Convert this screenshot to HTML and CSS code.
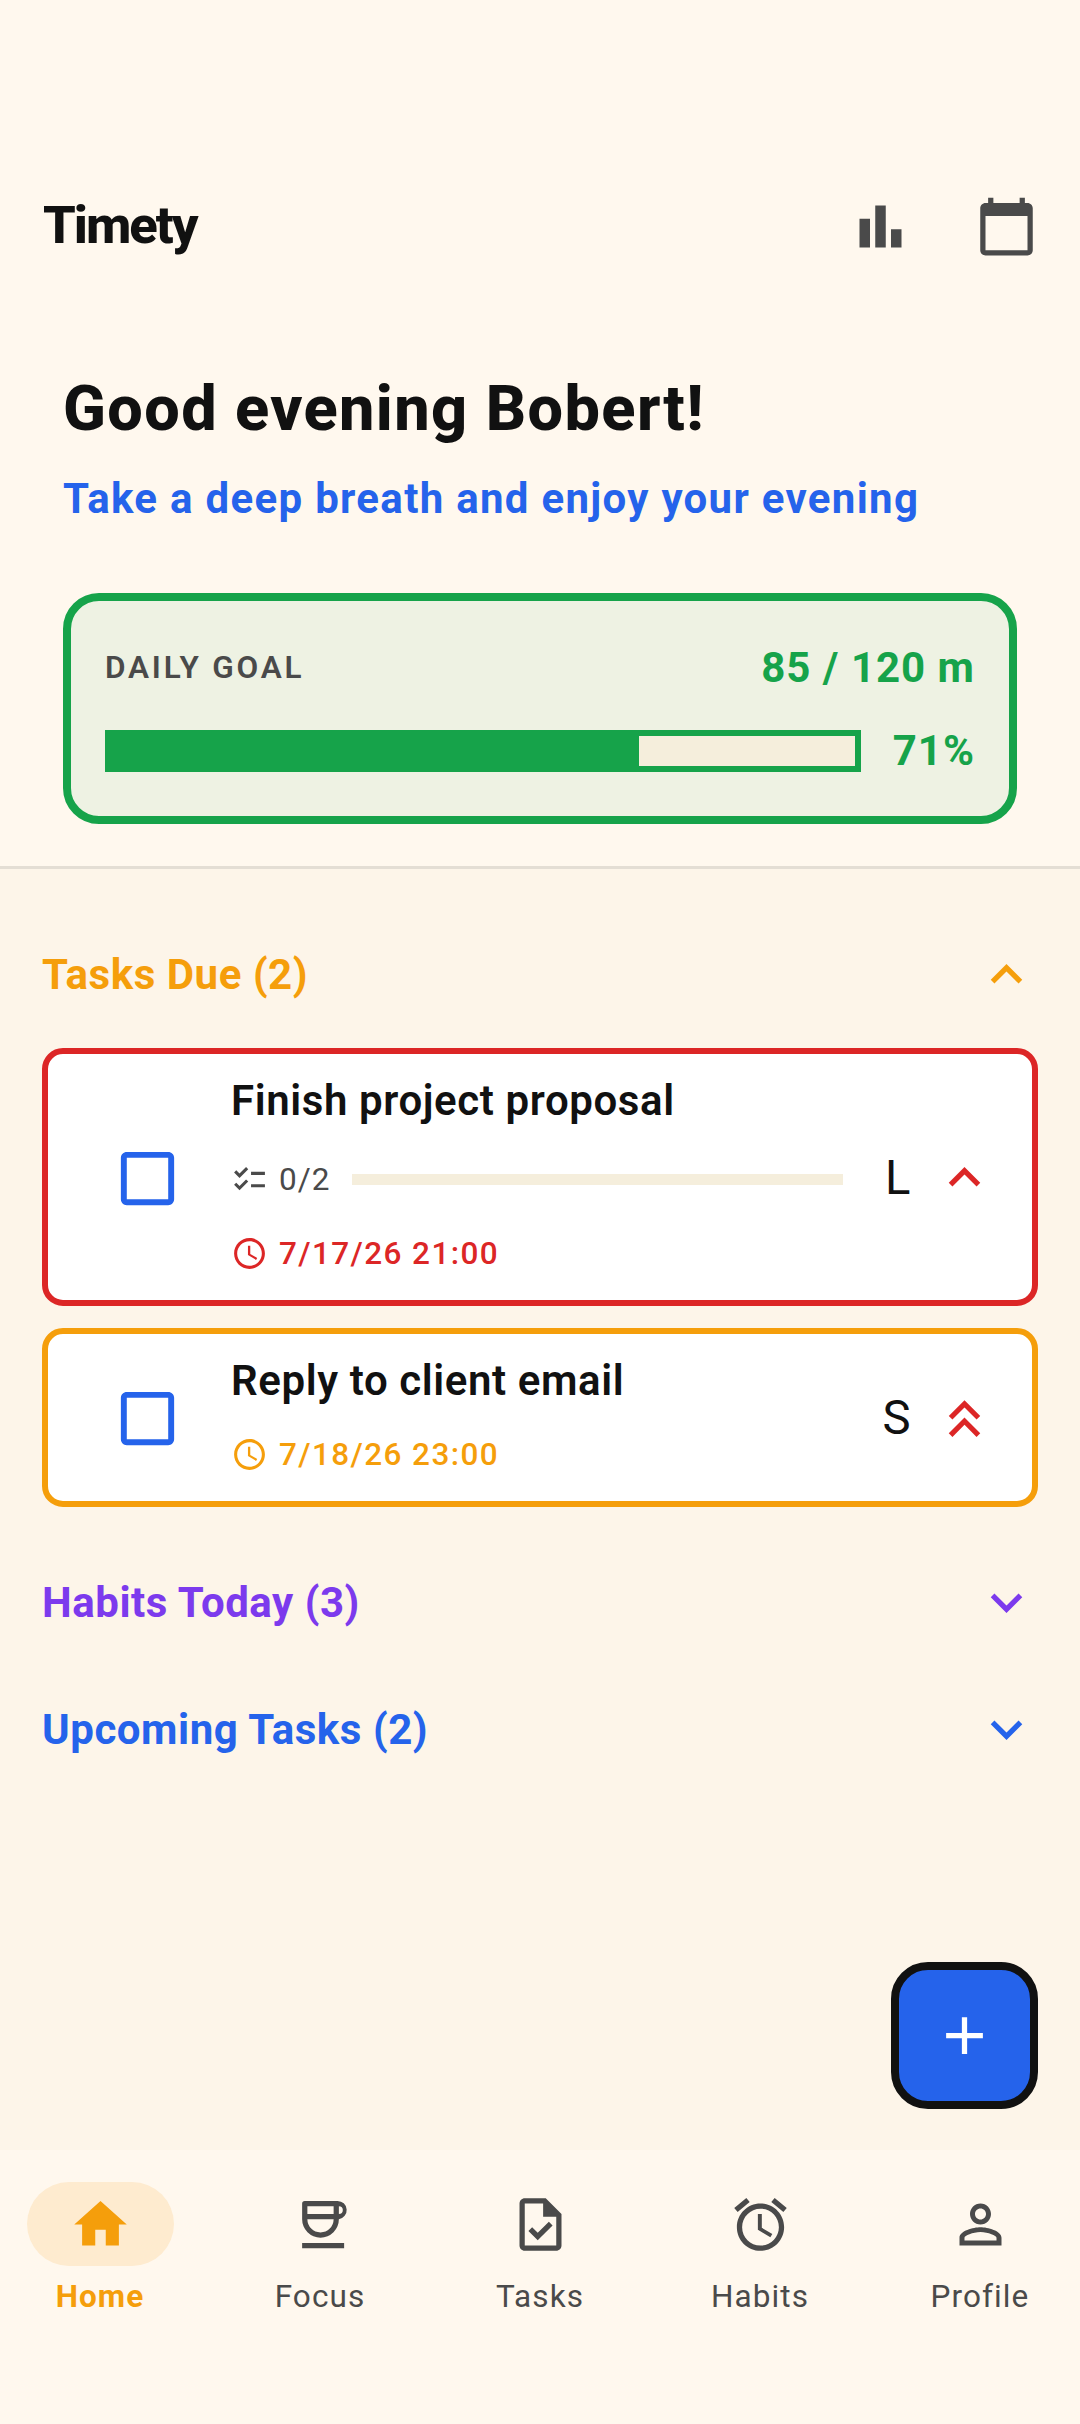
FILE: index.html
```html
<!DOCTYPE html>
<html lang="en">
<head>
    <meta charset="UTF-8">
    <meta name="viewport" content="width=device-width, initial-scale=1.0">
    <title>Timety</title>
    <link rel="stylesheet" href="styles.css">
</head>
<body>
    <div class="page">
        <div class="top">
            <header class="app-header">
                <h1 class="brand">Timety</h1>
                <div class="header-icons">
                    <svg class="icon-nav" viewBox="0 0 24 24"><path d="M4 9h4v11H4zM16 13h4v7h-4zM10 4h4v16h-4z"/></svg>
                    <svg class="icon-nav" viewBox="0 0 24 24"><path d="M20 3h-1V1h-2v2H7V1H5v2H4c-1.1 0-2 .9-2 2v16c0 1.1.9 2 2 2h16c1.1 0 2-.9 2-2V5c0-1.1-.9-2-2-2zm0 18H4V8h16v13z"/></svg>
                </div>
            </header>
            <div class="hero">
                <h2 class="greeting">Good evening Bobert!</h2>
                <p class="subtitle">Take a deep breath and enjoy your evening</p>
                <div class="goal-card">
                    <div class="goal-row">
                        <span class="goal-label">DAILY GOAL</span>
                        <span class="goal-value">85 / 120 m</span>
                    </div>
                    <div class="goal-progress">
                        <div class="goal-bar"><div class="goal-fill" style="width: 71%"></div></div>
                        <span class="goal-percent">71%</span>
                    </div>
                </div>
            </div>
        </div>

        <main class="content">
            <section class="section">
                <div class="section-head due">
                    <span>Tasks Due (2)</span>
                    <svg class="icon-nav" viewBox="0 0 24 24"><path d="M7.41 15.41L12 10.83l4.59 4.58L18 14l-6-6-6 6z"/></svg>
                </div>
                <div class="task-list">
                    <div class="task overdue">
                        <svg class="task-check" viewBox="0 0 24 24"><path d="M19 5v14H5V5h14m0-2H5c-1.1 0-2 .9-2 2v14c0 1.1.9 2 2 2h14c1.1 0 2-.9 2-2V5c0-1.1-.9-2-2-2z"/></svg>
                        <div class="task-body">
                            <div class="task-title">Finish project proposal</div>
                            <div class="task-sub">
                                <svg class="icon-small" viewBox="0 0 24 24"><path d="M22 7h-9v2h9V7zm0 8h-9v2h9v-2zM5.54 11L2 7.46l1.41-1.41 2.12 2.12 4.24-4.24 1.41 1.41L5.54 11zm0 8L2 15.46l1.41-1.41 2.12 2.12 4.24-4.24 1.41 1.41L5.54 19z"/></svg>
                                <span class="task-count">0/2</span>
                                <div class="task-track"></div>
                            </div>
                            <div class="task-date">
                                <svg class="icon-small" viewBox="0 0 24 24"><path d="M11.99 2C6.47 2 2 6.48 2 12s4.47 10 9.99 10C17.52 22 22 17.52 22 12S17.52 2 11.99 2zM12 20c-4.42 0-8-3.58-8-8s3.58-8 8-8 8 3.58 8 8-3.58 8-8 8zm.5-13H11v6l5.25 3.15.75-1.23-4.5-2.67z"/></svg>
                                <span>7/17/26 21:00</span>
                            </div>
                        </div>
                        <div class="task-meta">
                            <span class="task-size">L</span>
                            <svg class="icon-nav priority" viewBox="0 0 24 24"><path d="M7.41 15.41L12 10.83l4.59 4.58L18 14l-6-6-6 6z"/></svg>
                        </div>
                    </div>
                    <div class="task soon">
                        <svg class="task-check" viewBox="0 0 24 24"><path d="M19 5v14H5V5h14m0-2H5c-1.1 0-2 .9-2 2v14c0 1.1.9 2 2 2h14c1.1 0 2-.9 2-2V5c0-1.1-.9-2-2-2z"/></svg>
                        <div class="task-body">
                            <div class="task-title">Reply to client email</div>
                            <div class="task-date">
                                <svg class="icon-small" viewBox="0 0 24 24"><path d="M11.99 2C6.47 2 2 6.48 2 12s4.47 10 9.99 10C17.52 22 22 17.52 22 12S17.52 2 11.99 2zM12 20c-4.42 0-8-3.58-8-8s3.58-8 8-8 8 3.58 8 8-3.58 8-8 8zm.5-13H11v6l5.25 3.15.75-1.23-4.5-2.67z"/></svg>
                                <span>7/18/26 23:00</span>
                            </div>
                        </div>
                        <div class="task-meta">
                            <span class="task-size">S</span>
                            <svg class="icon-nav priority" viewBox="0 0 24 24"><path d="M6 17.59L7.41 19 12 14.42 16.59 19 18 17.59l-6-6zM6 11l1.41 1.41L12 7.83l4.59 4.58L18 11l-6-6z"/></svg>
                        </div>
                    </div>
                </div>
            </section>

            <section class="section">
                <div class="section-head habits">
                    <span>Habits Today (3)</span>
                    <svg class="icon-nav" viewBox="0 0 24 24"><path d="M7.41 8.59L12 13.17l4.59-4.58L18 10l-6 6-6-6z"/></svg>
                </div>
            </section>

            <section class="section">
                <div class="section-head upcoming">
                    <span>Upcoming Tasks (2)</span>
                    <svg class="icon-nav" viewBox="0 0 24 24"><path d="M7.41 8.59L12 13.17l4.59-4.58L18 10l-6 6-6-6z"/></svg>
                </div>
            </section>

            <button class="fab" type="button">
                <svg class="icon-nav" viewBox="0 0 24 24"><path d="M19 13h-6v6h-2v-6H5v-2h6V5h2v6h6v2z"/></svg>
            </button>
        </main>

        <nav class="bottom-nav">
            <div class="nav-item active">
                <div class="nav-pill">
                    <svg class="icon-nav" viewBox="0 0 24 24"><path d="M10 20v-6h4v6h5v-8h3L12 3 2 12h3v8z"/></svg>
                </div>
                <span class="nav-label">Home</span>
            </div>
            <div class="nav-item">
                <div class="nav-pill">
                    <svg class="icon-nav" viewBox="0 0 24 24"><path fill-rule="evenodd" d="M6 3h12.5a3.5 3.5 0 0 1 .5 6.96V10a7 7 0 0 1-14 0V4a1 1 0 0 1 1-1zM7 5v3h10V5zM7 10a5 5 0 0 0 10 0zM19 5v3a1.5 1.5 0 0 0 0-3zM5 19h16v2H5z"/></svg>
                </div>
                <span class="nav-label">Focus</span>
            </div>
            <div class="nav-item">
                <div class="nav-pill">
                    <svg class="icon-nav" viewBox="0 0 24 24"><path d="M14 2H6c-1.1 0-1.99.9-1.99 2L4 20c0 1.1.89 2 1.99 2H18c1.1 0 2-.9 2-2V8l-6-6zm4 18H6V4h7v5h5v11zm-9.18-6.95L7.4 14.46 10.94 18l5.66-5.66-1.41-1.41-4.24 4.24-2.13-2.12z"/></svg>
                </div>
                <span class="nav-label">Tasks</span>
            </div>
            <div class="nav-item">
                <div class="nav-pill">
                    <svg class="icon-nav" viewBox="0 0 24 24"><path d="M22 5.72l-4.6-3.86-1.29 1.53 4.6 3.86L22 5.72zM7.88 3.39L6.6 1.86 2 5.71l1.29 1.53 4.59-3.85zM12.5 8H11v6l4.75 2.85.75-1.23-4-2.37V8zM12 4c-4.97 0-9 4.03-9 9s4.03 9 9 9 9-4.03 9-9-4.03-9-9-9zm0 16c-3.87 0-7-3.13-7-7s3.13-7 7-7 7 3.13 7 7-3.13 7-7 7z"/></svg>
                </div>
                <span class="nav-label">Habits</span>
            </div>
            <div class="nav-item">
                <div class="nav-pill">
                    <svg class="icon-nav" viewBox="0 0 24 24"><path d="M12 5.9c1.16 0 2.1.94 2.1 2.1s-.94 2.1-2.1 2.1S9.9 9.16 9.9 8s.94-2.1 2.1-2.1m0 9c2.97 0 6.1 1.46 6.1 2.1v1.1H5.9V17c0-.64 3.13-2.1 6.1-2.1M12 4C9.79 4 8 5.79 8 8s1.79 4 4 4 4-1.79 4-4-1.79-4-4-4zm0 9c-2.67 0-8 1.34-8 4v3h16v-3c0-2.66-5.33-4-8-4z"/></svg>
                </div>
                <span class="nav-label">Profile</span>
            </div>
        </nav>
    </div>
</body>
</html>
```

FILE: styles.css
```css
* {
    box-sizing: border-box;
}
body {
    margin: 0;
    font-family: Roboto, "Liberation Sans", sans-serif;
    background-color: #fff8ee;
    color: #111;
}
svg {
    display: block;
    flex-shrink: 0;
    fill: currentColor;
}
.page {
    width: 1080px;
    height: 2424px;
    display: flex;
    flex-direction: column;
}
.icon-nav {
    width: 63px;
    height: 63px;
}
.icon-small {
    width: 37px;
    height: 37px;
}

/* top part */
.top {
    border-bottom: 3px solid #e4ded4;
    padding-top: 190px;
    padding-bottom: 42px;
}
.app-header {
    height: 72px;
    padding: 0 42px 0 43px;
    display: flex;
    align-items: center;
    justify-content: space-between;
}
.brand {
    margin: 0 0 2px;
    font-size: 52.5px;
    font-weight: 800;
    letter-spacing: -2px;
}
.header-icons {
    display: flex;
    align-items: center;
    gap: 63px;
    color: #4a4a4a;
}
.hero {
    margin-top: 110px;
    padding: 0 63px;
}
.greeting {
    margin: 0;
    font-size: 63px;
    line-height: 74px;
    font-weight: 800;
    letter-spacing: 1.4px;
}
.subtitle {
    margin: 24px 0 0;
    padding-top: 1px;
    font-size: 42px;
    line-height: 55px;
    font-weight: 700;
    letter-spacing: 1.3px;
    color: #2563eb;
}
.goal-card {
    margin-top: 67px;
    padding: 41px 34px 44px;
    border: 8px solid #16a34a;
    border-radius: 36px;
    background-color: #eef2e3;
}
.goal-row {
    display: flex;
    align-items: center;
    justify-content: space-between;
    height: 50px;
}
.goal-label {
    font-size: 31.5px;
    font-weight: 600;
    letter-spacing: 2.8px;
    color: #4a4a4a;
}
.goal-value {
    font-size: 42px;
    font-weight: 700;
    letter-spacing: 1px;
    color: #16a34a;
}
.goal-progress {
    margin-top: 38px;
    height: 42px;
    display: flex;
    align-items: center;
    gap: 32px;
}
.goal-bar {
    flex: 1;
    height: 42px;
    border: 6px solid #16a34a;
    background-color: #f5eedc;
}
.goal-fill {
    height: 100%;
    background-color: #16a34a;
}
.goal-percent {
    font-size: 42px;
    line-height: 42px;
    font-weight: 700;
    letter-spacing: 1px;
    color: #16a34a;
}

/* sections */
.content {
    flex: 1;
    position: relative;
    padding: 74px 42px 0;
    background-color: #fdf5e9;
}
.section {
    margin-bottom: 64px;
}
.section-head {
    height: 63px;
    display: flex;
    align-items: center;
    justify-content: space-between;
    font-size: 42px;
    font-weight: 700;
    letter-spacing: 0.55px;
}
.due {
    color: #f59e0b;
}
.habits {
    color: #7c3aed;
}
.upcoming {
    color: #2563eb;
}
.task-list {
    margin-top: 42px;
    display: flex;
    flex-direction: column;
    gap: 22px;
}
.task {
    display: flex;
    align-items: center;
    padding: 23px 36px 28px 64px;
    border: 6px solid;
    border-radius: 21px;
    background-color: #fff;
}
.task.overdue {
    border-color: #dc2626;
}
.task.soon {
    border-color: #f59e0b;
}
.task-check {
    width: 71px;
    height: 71px;
    margin-top: 7px;
    margin-right: 48px;
    color: #2563eb;
}
.task-body {
    flex: 1;
    display: flex;
    flex-direction: column;
    gap: 30px;
}
.task-title {
    font-size: 42px;
    line-height: 48px;
    font-weight: 600;
    letter-spacing: 0.6px;
}
.task-sub {
    height: 49px;
    display: flex;
    align-items: center;
    gap: 11px;
    color: #4a4a4a;
}
.task-count {
    font-size: 31.5px;
    letter-spacing: 1px;
}
.task-track {
    flex: 1;
    height: 11px;
    margin-left: 11px;
    background-color: #f5eedc;
}
.task-date {
    height: 38px;
    display: flex;
    align-items: center;
    gap: 11px;
    font-size: 31.5px;
    font-weight: 500;
    letter-spacing: 1.4px;
}
.overdue .task-date {
    color: #dc2626;
}
.soon .task-date {
    color: #f59e0b;
}
.task-meta {
    margin-top: 6px;
    margin-left: 42px;
    display: flex;
    align-items: center;
    gap: 22.5px;
}
.task-size {
    font-size: 47.25px;
    font-weight: 400;
}
.priority {
    color: #dc2626;
}
.fab {
    position: absolute;
    right: 42px;
    bottom: 41px;
    width: 147px;
    height: 147px;
    padding: 0;
    display: flex;
    align-items: center;
    justify-content: center;
    border: 8px solid #111;
    border-radius: 37px;
    background-color: #2563eb;
    color: #fff;
}

/* bottom bar */
.bottom-nav {
    height: 274px;
    padding-top: 32px;
    display: flex;
    justify-content: space-between;
    background-color: #fff8ee;
}
.nav-item {
    width: 200px;
    display: flex;
    flex-direction: column;
    align-items: center;
    color: #4a4a4a;
}
.nav-pill {
    width: 147px;
    height: 84px;
    display: flex;
    align-items: center;
    justify-content: center;
    border-radius: 42px;
}
.nav-label {
    margin-top: 12px;
    font-size: 31.5px;
    line-height: 38px;
    letter-spacing: 1.1px;
}
.nav-item.active {
    color: #f59e0b;
}
.active .nav-pill {
    background-color: #feebcf;
}
.active .nav-label {
    font-weight: 700;
    letter-spacing: 1px;
}
```
